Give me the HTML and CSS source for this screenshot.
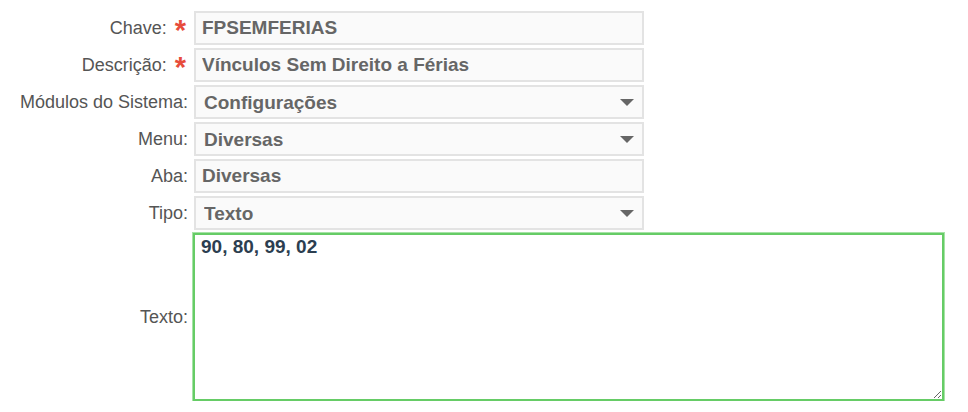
FILE: index.html
```html
<!DOCTYPE html>
<html lang="pt-BR">
<head>
  <meta charset="UTF-8">
  <title>Parâmetro</title>
  <link rel="stylesheet" href="styles.css">
</head>
<body>
  <form class="form">
    <!-- Chave -->
    <div class="row">
      <label class="label" for="chave">Chave: <span class="req">*</span></label>
      <input class="field" id="chave" type="text" value="FPSEMFERIAS">
    </div>

    <!-- Descricao -->
    <div class="row">
      <label class="label" for="descricao">Descrição: <span class="req">*</span></label>
      <input class="field" id="descricao" type="text" value="Vínculos Sem Direito a Férias">
    </div>

    <div class="row">
      <label class="label" for="modulo">Módulos do Sistema:</label>
      <div class="select-wrap">
        <select class="field select" id="modulo">
          <option>Configurações</option>
        </select>
        <svg class="arrow" width="14" height="7" viewBox="0 0 14 7"><path d="M0 0H14L7 7Z" fill="#666"/></svg>
      </div>
    </div>

    <div class="row">
      <label class="label" for="menu">Menu:</label>
      <div class="select-wrap">
        <select class="field select" id="menu">
          <option>Diversas</option>
        </select>
        <svg class="arrow" width="14" height="7" viewBox="0 0 14 7"><path d="M0 0H14L7 7Z" fill="#666"/></svg>
      </div>
    </div>

    <div class="row">
      <label class="label" for="aba">Aba:</label>
      <input class="field" id="aba" type="text" value="Diversas">
    </div>

    <div class="row">
      <label class="label" for="tipo">Tipo:</label>
      <div class="select-wrap">
        <select class="field select" id="tipo">
          <option>Texto</option>
        </select>
        <svg class="arrow" width="14" height="7" viewBox="0 0 14 7"><path d="M0 0H14L7 7Z" fill="#666"/></svg>
      </div>
    </div>

    <!-- Texto -->
    <div class="row row-text">
      <label class="label" for="texto">Texto:</label>
      <textarea class="textarea" id="texto">90, 80, 99, 02</textarea>
    </div>
  </form>
</body>
</html>
```

FILE: styles.css
```css
/* Page */
body {
  margin: 0;
  background: #fff;
  font-family: "Liberation Sans", Arial, sans-serif;
}

.form {
  display: flex;
  flex-direction: column;
  gap: 3px;
  padding-top: 11px;
}

/* Rows */
.row {
  display: flex;
  align-items: center;
}

.label {
  width: 188px;
  text-align: right;
  font-size: 18px;
  color: #555;
  margin-right: 6px;
}

.req {
  color: #e74c3c;
  font-weight: bold;
  font-size: 29px;
  line-height: 18px;
  vertical-align: -6px;
  margin-left: 3px;
  margin-right: 2px;
}

/* Inputs */
.field {
  box-sizing: border-box;
  width: 450px;
  height: 34px;
  margin: 0;
  padding: 0 6px;
  border: 2px solid #e3e3e3;
  background: #fafafa;
  font-family: "Liberation Sans", Arial, sans-serif;
  font-size: 19px;
  font-weight: bold;
  color: #666;
  outline: none;
}

.select-wrap {
  position: relative;
  display: flex;
}

.select {
  appearance: none;
  -webkit-appearance: none;
  padding-left: 8px;
  border-radius: 0;
}

.arrow {
  position: absolute;
  top: 14px;
  right: 10px;
  pointer-events: none;
}

/* Textarea */
.textarea {
  box-sizing: border-box;
  width: 751px;
  height: 168px;
  margin: 0 0 0 -1px;
  padding: 1px 6px;
  border: 2px solid #66cc66;
  box-shadow: 0 0 0 1px #a6e3a6;
  font-family: "Liberation Sans", Arial, sans-serif;
  font-size: 19px;
  font-weight: bold;
  color: #2c3e50;
  outline: none;
}
```
